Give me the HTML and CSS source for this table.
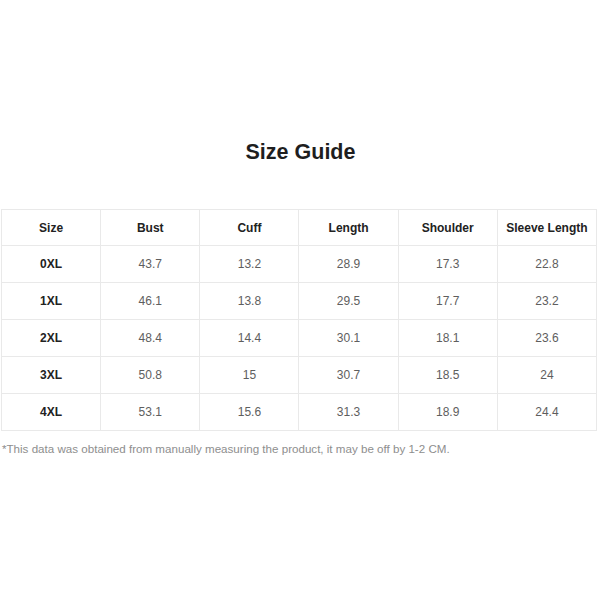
FILE: index.html
```html
<!DOCTYPE html>
<html>
<head>
<meta charset="utf-8">
<link rel="stylesheet" href="styles.css">
</head>
<body>
<div class="page">
  <h1 class="title">Size Guide</h1>
  <table class="sizes">
    <thead>
      <tr><th>Size</th><th>Bust</th><th>Cuff</th><th>Length</th><th>Shoulder</th><th>Sleeve Length</th></tr>
    </thead>
    <tbody>
      <tr><td class="sz">0XL</td><td>43.7</td><td>13.2</td><td>28.9</td><td>17.3</td><td>22.8</td></tr>
      <tr><td class="sz">1XL</td><td>46.1</td><td>13.8</td><td>29.5</td><td>17.7</td><td>23.2</td></tr>
      <tr><td class="sz">2XL</td><td>48.4</td><td>14.4</td><td>30.1</td><td>18.1</td><td>23.6</td></tr>
      <tr><td class="sz">3XL</td><td>50.8</td><td>15</td><td>30.7</td><td>18.5</td><td>24</td></tr>
      <tr><td class="sz">4XL</td><td>53.1</td><td>15.6</td><td>31.3</td><td>18.9</td><td>24.4</td></tr>
    </tbody>
  </table>
  <p class="note">*This data was obtained from manually measuring the product, it may be off by 1-2 CM.</p>
</div>
</body>
</html>
```
FILE: styles.css
```css
html, body {
  margin: 0;
  padding: 0;
  background: #fff;
}
body {
  font-family: "Liberation Sans", Arial, sans-serif;
}
.page {
  width: 600px;
  padding-top: 139px;
  padding-left: 1px;
  box-sizing: border-box;
}
.title {
  margin: 0;
  height: 70px;
  text-align: center;
  font-size: 21.5px;
  font-weight: bold;
  color: #1e1e1e;
  line-height: 26px;
}
.sizes {
  width: 596px;
  border-collapse: collapse;
  table-layout: fixed;
}
.sizes th, .sizes td {
  border: 1px solid #e9e9e9;
  text-align: center;
  font-size: 12px;
  padding: 0;
}
.sizes th {
  height: 35px;
  font-weight: bold;
  color: #222;
}
.sizes td {
  height: 36px;
  color: #5e5e5e;
}
.sizes td.sz {
  font-weight: bold;
  color: #222;
}
.note {
  margin: 11px 0 0 1px;
  font-size: 11.6px;
  color: #8e8e8e;
}
```
